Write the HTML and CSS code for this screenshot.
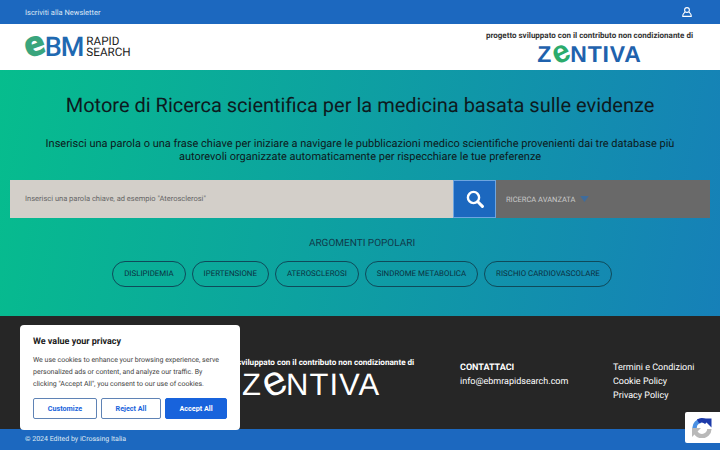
FILE: index.html
```html
<!DOCTYPE html>
<html lang="it">
<head>
    <meta charset="UTF-8">
    <title>eBM Rapid Search</title>
    <link rel="stylesheet" href="styles.css">
</head>
<body>
    <!-- Top bar -->
    <div class="topbar">
        <a class="topbar-link">Iscriviti alla Newsletter</a>
        <svg class="user-icon" width="10" height="10" viewBox="0 0 10 10" fill="none" stroke="#fff" stroke-width="1.1">
            <circle cx="5" cy="3" r="2.4"/>
            <path d="M3 5 L2 6.2 Q0.8 7.4 0.8 8.6 V9.4 H9.2 V8.6 Q9.2 7.4 8 6.2 L7 5"/>
        </svg>
    </div>

    <!-- Header -->
    <header class="header">
        <div class="logo">
            <span class="logo-e">e</span><span class="logo-bm">BM</span>
            <span class="logo-rapid">RAPID<br>SEARCH</span>
        </div>
        <div class="sponsor">
            <div class="sponsor-text">progetto sviluppato con il contributo non condizionante di</div>
            <div class="zentiva"><span>Z</span><span class="zentiva-e">e</span><span>NTIVA</span></div>
        </div>
    </header>

    <!-- Search area -->
    <main class="hero">
        <h1 class="hero-title">Motore di Ricerca scientifica per la medicina basata sulle evidenze</h1>
        <p class="hero-text">Inserisci una parola o una frase chiave per iniziare a navigare le pubblicazioni medico scientifiche provenienti dai tre database più autorevoli organizzate automaticamente per rispecchiare le tue preferenze</p>

        <div class="search-row">
            <div class="search-input">Inserisci una parola chiave, ad esempio "Aterosclerosi"</div>
            <div class="search-button">
                <svg width="18" height="18" viewBox="0 0 18 18" fill="none" stroke="#fff">
                    <circle cx="7.5" cy="7.5" r="5.6" stroke-width="2.4"/>
                    <path d="M11.8 11.8 L16.4 16.4" stroke-width="3" stroke-linecap="round"/>
                </svg>
            </div>
            <div class="search-advanced">
                <span>RICERCA AVANZATA</span>
                <svg width="9" height="6" viewBox="0 0 10 7" fill="#3f6c9c"><path d="M0 0 H10 L5 7 Z"/></svg>
            </div>
        </div>

        <div class="topics-title">ARGOMENTI POPOLARI</div>
        <div class="topics">
            <a class="topic">DISLIPIDEMIA</a>
            <a class="topic">IPERTENSIONE</a>
            <a class="topic">ATEROSCLEROSI</a>
            <a class="topic">SINDROME METABOLICA</a>
            <a class="topic">RISCHIO CARDIOVASCOLARE</a>
        </div>
    </main>

    <!-- Footer -->
    <footer class="footer">
        <div class="footer-sponsor">
            <div class="footer-sponsor-text">progetto sviluppato con il contributo non condizionante di</div>
            <div class="zentiva zentiva-white"><span>Z</span><span class="zentiva-e">e</span><span>NTIVA</span></div>
        </div>
        <div class="footer-contact">
            <div class="footer-heading">CONTATTACI</div>
            <div>info@ebmrapidsearch.com</div>
        </div>
        <div class="footer-links">
            <a>Termini e Condizioni</a>
            <a>Cookie Policy</a>
            <a>Privacy Policy</a>
        </div>
    </footer>
    <div class="copyright">© 2024 Edited by iCrossing Italia</div>

    <!-- Cookie banner -->
    <div class="cookie">
        <div class="cookie-title">We value your privacy</div>
        <p class="cookie-text">We use cookies to enhance your browsing experience, serve personalized ads or content, and analyze our traffic. By clicking "Accept All", you consent to our use of cookies.</p>
        <div class="cookie-buttons">
            <button class="cookie-btn cookie-customize">Customize</button>
            <button class="cookie-btn cookie-reject">Reject All</button>
            <button class="cookie-btn cookie-accept">Accept All</button>
        </div>
    </div>

    <!-- reCAPTCHA badge -->
    <div class="recaptcha">
        <svg width="20" height="20" viewBox="0 0 20 20" fill="none" stroke-width="4.4">
            <path d="M2.6 10.5 V9.5 A7.2 7.2 0 0 1 9 2.7" stroke="#4a90e2"/>
            <path d="M6 3.4 A7.2 7.2 0 0 1 14.6 4.4" stroke="#1c3aa9"/>
            <path d="M10.5 0.5 L19.5 0.5 L19.5 9.5 Z" fill="#1c3aa9" stroke="none"/>
            <path d="M17.4 11 A7.4 7.4 0 0 1 2.6 10.5" stroke="#b9b9b9"/>
            <path d="M0 10 H9 L0 19 Z" fill="#b9b9b9" stroke="none"/>
        </svg>
    </div>
</body>
</html>
```

FILE: styles.css
```css
/* General styling */
body {
    font-family: Roboto, "Liberation Sans", sans-serif;
    margin: 0;
    height: 450px;
    overflow: hidden;
    color: #111;
    background-color: #262626;
    text-rendering: geometricPrecision;
}

/* Top bar */
.topbar {
    height: 24px;
    background-color: #1c68bf;
    display: flex;
    align-items: center;
    justify-content: space-between;
    padding: 0 28px 0 25px;
    color: #dce7f5;
    font-size: 7.5px;
}

/* Header */
.header {
    height: 46px;
    background-color: #fff;
    display: flex;
    justify-content: space-between;
    padding: 0 27px 0 25px;
}

.logo {
    display: flex;
    align-items: center;
    height: 46px;
    margin-left: -2px;
}

.logo-e {
    font-family: "Open Sans", sans-serif;
    font-weight: 800;
    font-size: 35px;
    line-height: 1;
    color: #3aa57d;
    margin-top: -7px;
    transform: rotate(-20deg);
}

.logo-bm {
    font-size: 27px;
    font-weight: 500;
    color: #1f69b1;
    letter-spacing: -1px;
    margin-right: 3px;
}

.logo-rapid {
    font-size: 11.7px;
    line-height: 11px;
    color: #222;
}

.sponsor {
    display: flex;
    flex-direction: column;
    align-items: center;
    padding-top: 7px;
}

.sponsor-text {
    font-size: 8px;
    line-height: 10px;
    font-weight: 700;
    color: #333;
}

.zentiva {
    font-family: "Liberation Sans", sans-serif;
    font-size: 23px;
    line-height: 24px;
    letter-spacing: 0.8px;
    margin-top: 1px;
    color: #1f62ad;
    font-weight: 700;
}

.zentiva-e {
    display: inline-block;
    font-size: 1.35em;
    line-height: 0;
    color: #2cab6c;
    transform: rotate(-25deg);
}

.zentiva-white {
    color: #fff;
    font-size: 31px;
    line-height: 34px;
    letter-spacing: 1px;
    margin-top: 1px;
    font-weight: 400;
}

.zentiva-white .zentiva-e {
    color: #fff;
}

/* Search area */
.hero {
    height: 246px;
    box-sizing: border-box;
    background: linear-gradient(100deg, #06bd8d 0%, #1680b8 100%);
    padding: 22px 10px 0;
    text-align: center;
}

.hero-title {
    font-size: 20px;
    font-weight: 400;
    line-height: 26px;
    margin: 0;
    color: #0d1a20;
}

.hero-text {
    font-size: 11px;
    line-height: 13px;
    margin: 19px 30px 0;
    color: #0d1a20;
}

.search-row {
    display: flex;
    height: 38px;
    margin-top: 17px;
    text-align: left;
}

.search-input {
    width: 443px;
    box-sizing: border-box;
    background-color: #d3cfc9;
    color: #666;
    font-size: 7.5px;
    line-height: 38px;
    padding-left: 15px;
}

.search-button {
    width: 43px;
    box-sizing: border-box;
    background-color: #1c68bf;
    border: 1px solid #6ea5e0;
    display: flex;
    align-items: center;
    justify-content: center;
}

.search-advanced {
    flex: 1;
    background-color: #696969;
    color: #c9c9c9;
    font-size: 7.5px;
    display: flex;
    align-items: center;
    gap: 5px;
    padding-left: 10px;
}

.topics-title {
    font-size: 10px;
    line-height: 14px;
    margin: 19px 0 0 4px;
    color: #0f3a4a;
}

.topics {
    display: flex;
    justify-content: center;
    gap: 6px;
    margin: 10px 0 0 4px;
}

.topic {
    height: 24px;
    line-height: 24px;
    padding: 0 11px;
    border: 1px solid #0f4a5a;
    border-radius: 13px;
    font-size: 7.9px;
    color: #0b3040;
}

/* Footer */
.footer {
    height: 113px;
    box-sizing: border-box;
    background-color: #262626;
    color: #fff;
    display: flex;
    padding-top: 41px;
}

.footer-sponsor {
    width: 460px;
    box-sizing: border-box;
    padding-left: 204px;
}

.footer-sponsor-text {
    font-size: 8.15px;
    font-weight: 700;
    line-height: 10px;
    white-space: nowrap;
    width: 210px;
    text-align: right;
}

.footer-sponsor .zentiva {
    width: 214px;
    text-align: center;
}

.footer-contact {
    width: 153px;
    font-size: 9px;
    line-height: 14px;
    margin-top: 4px;
}

.footer-links {
    display: flex;
    flex-direction: column;
    font-size: 9px;
    line-height: 14px;
    margin-top: 4px;
}

.footer-heading {
    font-weight: 700;
}

.copyright {
    height: 21px;
    line-height: 21px;
    background-color: #1c68bf;
    color: #dfe8f3;
    font-size: 7px;
    padding-left: 25px;
}

/* Cookie banner */
.cookie {
    position: fixed;
    left: 20px;
    top: 325px;
    width: 220px;
    height: 105px;
    box-sizing: border-box;
    padding: 11px 13px;
    background-color: #fff;
    border-radius: 4px;
}

.cookie-title {
    font-size: 9px;
    font-weight: 700;
    color: #212121;
    line-height: 13px;
}

.cookie-text {
    font-size: 7px;
    line-height: 12px;
    color: #444;
    margin: 5px 0 0;
}

.cookie-buttons {
    display: flex;
    gap: 4px;
    margin-top: 8px;
}

.cookie-btn {
    height: 21px;
    font-family: inherit;
    font-size: 7.2px;
    font-weight: 700;
    border-radius: 2px;
    border: 1px solid #1863dc;
    padding: 0;
}

.cookie-customize,
.cookie-reject {
    background-color: #fff;
    color: #1863dc;
    border: 1.5px solid #5f83b5;
}

.cookie-customize {
    width: 64px;
}

.cookie-reject {
    width: 60px;
}

.cookie-accept {
    width: 62px;
    background-color: #1863dc;
    color: #fff;
}

/* reCAPTCHA badge */
.recaptcha {
    position: fixed;
    left: 685px;
    top: 412px;
    width: 35px;
    height: 31px;
    background-color: #fff;
    display: flex;
    align-items: center;
    padding-left: 7px;
    box-sizing: border-box;
    border-radius: 2px 0 0 2px;
}
```
